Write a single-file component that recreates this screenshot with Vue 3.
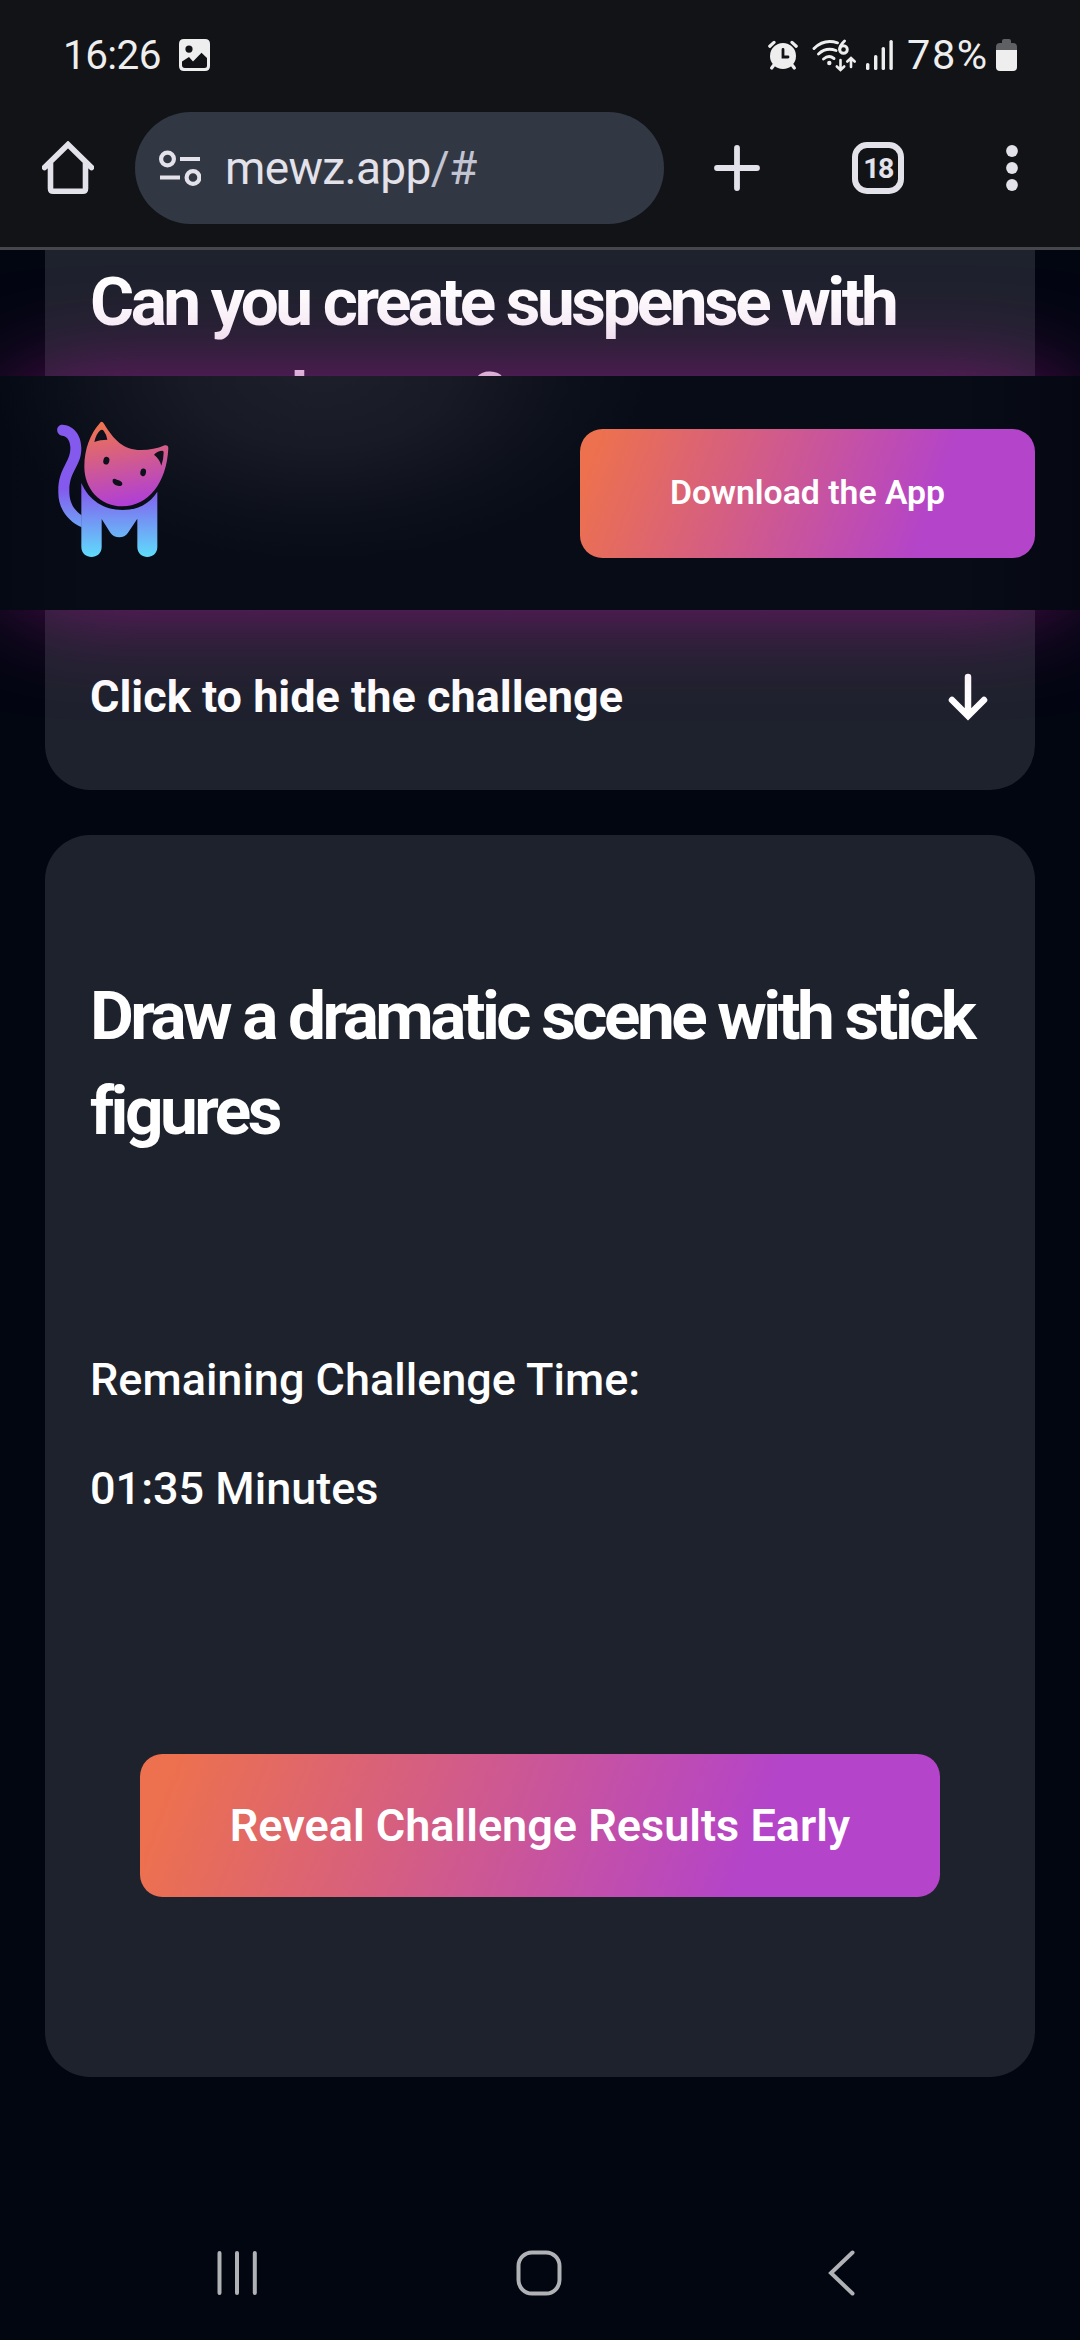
<script setup>
const signalBars = [
  { x: 0, h: 7 },
  { x: 8, h: 15 },
  { x: 15.6, h: 23 },
  { x: 23.4, h: 30 },
]
</script>

<template>
  <div class="screen">
    <div class="status">
      <div class="status-left">
        <span class="clock">16:26</span>
        <svg class="ic-photo" viewBox="0 0 31 32" width="31" height="32">
          <path fill="#eeeeee" fill-rule="evenodd" d="M5 0H26Q31 0 31 5V27Q31 32 26 32H5Q0 32 0 27V5Q0 0 5 0ZM10 6.5A3.6 3.6 0 1 0 10 13.700A3.600 3.600 0 1 0 10 6.500ZM3 22.500V26Q3 29 6 29H25.500Q28 29 28 26.500V19L22.500 13.700L14 22.500L10 18Z" />
        </svg>
      </div>
      <div class="status-right">
        <svg class="ic-alarm" viewBox="0 0 30 30" width="30" height="30">
          <circle cx="15" cy="16" r="13" fill="#eeeeee" />
          <path d="M1.800 6.200L6 2.400M28.200 6.200L24 2.400M5.500 25.500L3.700 28M24.500 25.500L26.300 28" stroke="#eeeeee" stroke-width="3.200" stroke-linecap="round" />
          <path d="M15 9.500V17H20" fill="none" stroke="#121317" stroke-width="2.800" stroke-linecap="round" />
        </svg>
        <svg class="ic-wifi" viewBox="0 0 45 33" width="45" height="33">
          <g fill="none" stroke="#eeeeee" stroke-width="2.900" stroke-linecap="round">
            <path d="M2 9.500Q12 -0.500 25.500 3.800" />
            <path d="M6.500 15Q14 8 24 11.500" />
            <path d="M11.500 20Q16.800 15.500 22 19.500" />
            <path d="M32.500 2Q27.500 6.500 27.700 10.500" />
            <circle cx="31.500" cy="10.500" r="3.800" />
            <path d="M28.500 21V30M24.800 27.500L28.500 31L32.200 27.500" stroke-width="2.600" />
            <path d="M39 28V19.500M35.300 22.500L39 19L42.700 22.500" stroke-width="2.600" />
          </g>
          <circle cx="17.300" cy="24" r="2.200" fill="#eeeeee" />
        </svg>
        <svg class="ic-signal" viewBox="0 0 27 30" width="27" height="30">
          <rect v-for="b in signalBars" :key="b.x" :x="b.x" :y="30 - b.h" width="3.400" :height="b.h" rx="1.600" fill="#eeeeee" />
        </svg>
        <span class="percent">78%</span>
        <svg class="ic-battery" viewBox="0 0 21 32" width="21" height="32">
          <path d="M6 2Q6 0 8 0H13Q15 0 15 2V4H17Q21 4 21 8V11H0V8Q0 4 4 4H6Z" fill="#5f6063" />
          <path d="M0 11H21V28Q21 32 17 32H4Q0 32 0 28Z" fill="#eeeeee" />
        </svg>
      </div>
    </div>

    <div class="toolbar">
      <svg class="ic-home" viewBox="0 0 52 54" width="52" height="54">
        <path d="M2.500 26.500L26 3.500L49.500 26.500M8.500 22V47.500Q8.500 50.200 11.200 50.200H40.800Q43.500 50.200 43.500 47.500V22" fill="none" stroke="#e3e1e9" stroke-width="5.600" stroke-linejoin="miter" stroke-linecap="round" />
      </svg>
      <div class="url">
        <svg viewBox="0 0 42 36" width="42" height="36" class="ic-tune">
          <g fill="none" stroke="#e3e1e9" stroke-width="4.200">
            <circle cx="8.500" cy="9" r="6.400" />
            <path d="M21 9H41M1 27.500H21" />
            <circle cx="34" cy="27.500" r="6.400" />
          </g>
        </svg>
        <span class="url-text">mewz.app<span class="dim">/#</span></span>
      </div>
      <svg class="ic-plus" viewBox="0 0 46 46" width="46" height="46">
        <path d="M3 23H43M23 3V43" stroke="#e3e1e9" stroke-width="5.800" stroke-linecap="round" />
      </svg>
      <div class="tabs">18</div>
      <svg class="ic-more" viewBox="0 0 12 48" width="12" height="48">
        <g fill="#e3e1e9">
          <circle cx="6" cy="7" r="5.900" /><circle cx="6" cy="24" r="5.900" /><circle cx="6" cy="41" r="5.900" />
        </g>
      </svg>
    </div>

    <main class="page">
      <section class="card card-top">
        <h2>Can you create suspense with some phrases?</h2>
        <div class="toggle">
          <span>Click to hide the challenge</span>
          <svg viewBox="0 0 40 48" width="40" height="48">
            <path d="M20 4V42M4 27L20 43L36 27" fill="none" stroke="#fff" stroke-width="6.500" stroke-linecap="round" stroke-linejoin="miter" />
          </svg>
        </div>
      </section>

      <section class="card card-main">
        <h2>Draw a dramatic scene with stick figures</h2>
        <p class="remaining">Remaining Challenge Time:</p>
        <p class="time">01:35 Minutes</p>
        <button class="btn reveal">Reveal Challenge Results Early</button>
      </section>

      <header class="site-header">
        <svg class="logo" viewBox="50 60 336 411" width="112" height="137">
          <defs>
            <linearGradient id="head" gradientUnits="userSpaceOnUse" x1="190" y1="70" x2="235" y2="315">
              <stop offset="0" stop-color="#ee7350" />
              <stop offset="1" stop-color="#b03fd6" />
            </linearGradient>
            <linearGradient id="body" gradientUnits="userSpaceOnUse" x1="0" y1="262" x2="0" y2="468">
              <stop offset="0" stop-color="#8459ee" />
              <stop offset="1" stop-color="#5fdcfb" />
            </linearGradient>
          </defs>
          <path d="M66 71C96 72 123 98 123 142C123 196 87 210 87 268C86 305 102 328 124 343V379C85 362 54 325 54 275C52 200 92 185 90 138C89 118 80 105 65 104C45 101 46 71 66 71Z" fill="url(#body)" />
          <path d="M123 246C145 297 190 327 247 327C292 327 328 308 351 272V438C351 478 291 478 291 438V353L263 395C252 413 222 413 210 395L184 354V438C184 478 123 478 123 438Z" fill="url(#body)" />
          <path d="M177 68Q184 57 191 68C220 116 249 147 302 147C329 147 350 143 373 133Q384 131 384 142C379 246 324 316 246 316C178 316 132 262 132 197C132 144 150 99 177 68Z" fill="url(#head)" />
          <g fill="#0e111b">
            <path d="M162 123C166 106 172 95 180 88Q185 84 190 89Q198 99 201 116C186 116 174 118 162 123Z" />
            <path d="M341 161Q352 149 366 149Q370 149 370 154Q370 174 363 194C359 179 352 169 341 161Z" />
            <ellipse cx="198" cy="179" rx="9" ry="11.500" transform="rotate(14 198 179)" />
            <ellipse cx="308.500" cy="214" rx="8.500" ry="11.500" transform="rotate(10 308 214)" />
            <path d="M217 236Q220 231 230 236Q246 240 246 248Q246 255 236 255Q221 253 217 243Z" />
          </g>
        </svg>
        <button class="btn download">Download the App</button>
      </header>
    </main>

    <nav class="sysnav">
      <svg viewBox="0 0 40 46" width="40" height="46">
        <path d="M2.500 3V43M20 3V43M37.800 3V43" stroke="#b1b2b6" stroke-width="4" stroke-linecap="round" />
      </svg>
      <svg class="nav-home" viewBox="0 0 46 46" width="46" height="46">
        <rect x="2.500" y="2.500" width="41" height="41" rx="13.500" fill="none" stroke="#b1b2b6" stroke-width="4" />
      </svg>
      <svg viewBox="0 0 27 46" width="27" height="46">
        <path d="M24.500 2.500L3 23L24.500 43.500" fill="none" stroke="#b1b2b6" stroke-width="4" stroke-linecap="round" />
      </svg>
    </nav>
  </div>
</template>

<style>
body {
  background: #020611;
}
</style>

<style scoped>
.screen {
  width: 1080px;
  height: 2340px;
  display: flex;
  flex-direction: column;
  overflow: hidden;
  background: #020611;
  color: #fff;
  font-family: Roboto, sans-serif;
}
.screen svg {
  display: block;
  flex: none;
}

.status {
  height: 112px;
  box-sizing: border-box;
  padding: 0 63px 2px 63px;
  display: flex;
  justify-content: space-between;
  align-items: center;
  background: #121317;
  color: #eee;
}
.status-left,
.status-right {
  display: flex;
  align-items: center;
}
.clock,
.percent {
  font-size: 40.500px;
  line-height: 48px;
}
.clock {
  width: 116px;
  letter-spacing: -0.600px;
}
.ic-alarm {
  margin-right: 14px;
}
.ic-wifi {
  margin-right: 9px;
}
.percent {
  width: 81px;
  margin: 0 8px 0 14px;
  font-size: 41.500px;
  letter-spacing: 1.600px;
}

.toolbar {
  height: 138px;
  box-sizing: border-box;
  border-bottom: 3px solid #46474d;
  padding-bottom: 23px;
  display: flex;
  align-items: center;
  background: #121317;
}
.ic-home {
  margin-left: 42px;
}
.url {
  width: 529px;
  height: 112px;
  box-sizing: border-box;
  margin-left: 41px;
  padding-left: 24px;
  border-radius: 56px;
  background: #323843;
  display: flex;
  align-items: center;
}
.url-text {
  margin-left: 24px;
  font-size: 46px;
  line-height: 60px;
  letter-spacing: -0.650px;
  color: #e3e1e9;
}
.dim {
  color: #c3c4d2;
}
.ic-plus {
  margin-left: 50px;
}
.tabs {
  width: 52px;
  height: 52px;
  box-sizing: border-box;
  margin-left: 92px;
  border: 6px solid #e3e1e9;
  border-radius: 15px;
  font-size: 28.500px;
  font-weight: 700;
  line-height: 41px;
  letter-spacing: -1.700px;
  text-align: center;
  color: #e3e1e9;
}
.ic-more {
  margin-left: 102px;
}

.page {
  position: relative;
  flex: 1;
  padding: 0 45px;
}
.card {
  box-sizing: border-box;
  padding: 0 45px;
  background: #1e222d;
  display: flex;
  flex-direction: column;
}
.card-top {
  height: 540px;
  padding-top: 5px;
  padding-bottom: 69px;
  border-radius: 0 0 45px 45px;
  justify-content: space-between;
}
.card-main {
  height: 1242px;
  margin-top: 45px;
  padding-top: 134px;
  border-radius: 45px;
}
h2 {
  margin: 0;
  font-size: 67.500px;
  font-weight: 700;
  line-height: 94.500px;
  letter-spacing: -3.540px;
}
.toggle {
  display: flex;
  justify-content: space-between;
  align-items: center;
  font-size: 45px;
  font-weight: 700;
  line-height: 48px;
}
.toggle svg {
  margin-right: 2px;
}
p {
  margin: 0;
  font-size: 45px;
  font-weight: 500;
  line-height: 64px;
}
.remaining {
  margin-top: 190px;
}
.time {
  margin-top: 45px;
}
.btn {
  padding: 0;
  border: 0;
  border-radius: 22.500px;
  background: linear-gradient(110deg, #ed714e 4%, #b444c9 76%);
  color: #fff;
  font-family: inherit;
  font-weight: 600;
}
.reveal {
  align-self: center;
  width: 800px;
  height: 143px;
  margin-top: 233px;
  font-size: 45px;
}

.site-header {
  position: absolute;
  top: 126px;
  left: 0;
  width: 1080px;
  height: 234px;
  box-sizing: border-box;
  padding: 0 45px 0 57px;
  display: flex;
  align-items: center;
  justify-content: space-between;
  background:
    radial-gradient(ellipse 330px 190px at 320px -4px, rgba(36, 38, 48, 0.75) 0%, rgba(36, 38, 48, 0.56) 40%, rgba(36, 38, 48, 0.16) 76%, rgba(36, 38, 48, 0) 100%),
    linear-gradient(90deg, #050913 0, #080c17 90px, #080c17 960px, #050812 1080px);
  box-shadow: 0 0 110px -20px #9b148d;
}
.logo {
  margin-bottom: 8px;
}
.download {
  width: 455px;
  height: 129px;
  padding-bottom: 2px;
  font-size: 33.750px;
}

.sysnav {
  height: 134px;
  box-sizing: border-box;
  padding: 0 225px 0 217px;
  display: flex;
  align-items: center;
  justify-content: space-between;
}
.nav-home {
  margin-right: 7px;
}
</style>
